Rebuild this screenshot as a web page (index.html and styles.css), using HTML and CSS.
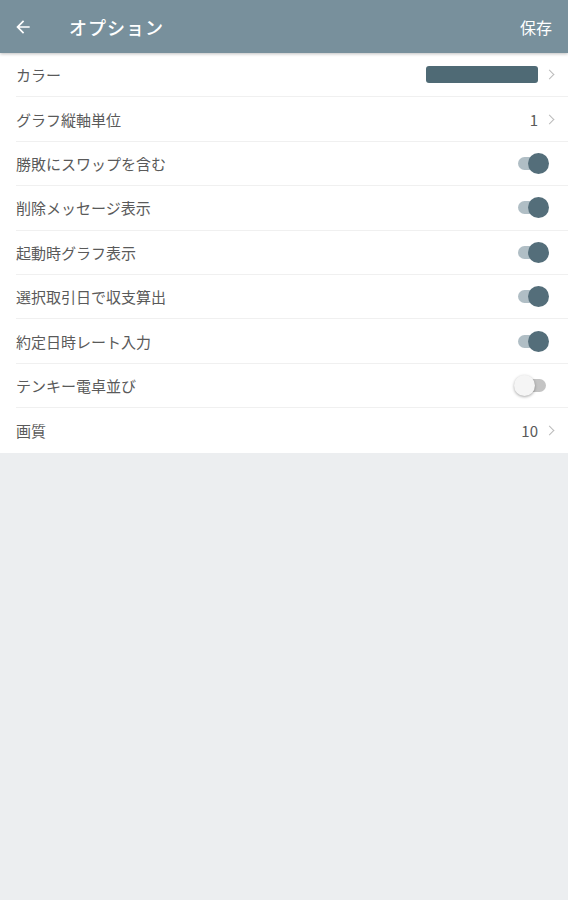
FILE: index.html
```html
<!DOCTYPE html>
<html lang="ja">
<head>
    <meta charset="UTF-8">
    <meta name="viewport" content="width=device-width, initial-scale=1.0">
    <title>オプション</title>
    <link rel="stylesheet" href="styles.css">
</head>
<body>
    <header class="toolbar">
        <svg class="back" width="20" height="20" viewBox="0 0 24 24">
            <path d="M20 11H7.83l5.59-5.59L12 4l-8 8 8 8 1.41-1.41L7.83 13H20v-2z" fill="#fff"/>
        </svg>
        <h1 class="title">オプション</h1>
        <span class="save">保存</span>
    </header>

    <ul class="list">
        <li class="row">
            <span class="label">カラー</span>
            <span class="value"><span class="swatch"></span><span class="chev"></span></span>
        </li>
        <li class="row">
            <span class="label">グラフ縦軸単位</span>
            <span class="value">1<span class="chev"></span></span>
        </li>
        <li class="row">
            <span class="label">勝敗にスワップを含む</span>
            <span class="switch on"></span>
        </li>
        <li class="row">
            <span class="label">削除メッセージ表示</span>
            <span class="switch on"></span>
        </li>
        <li class="row">
            <span class="label">起動時グラフ表示</span>
            <span class="switch on"></span>
        </li>
        <li class="row">
            <span class="label">選択取引日で収支算出</span>
            <span class="switch on"></span>
        </li>
        <li class="row">
            <span class="label">約定日時レート入力</span>
            <span class="switch on"></span>
        </li>
        <li class="row">
            <span class="label">テンキー電卓並び</span>
            <span class="switch"></span>
        </li>
        <li class="row">
            <span class="label">画質</span>
            <span class="value">10<span class="chev"></span></span>
        </li>
    </ul>
</body>
</html>
```

FILE: styles.css
```css
body {
    margin: 0;
    background-color: #eceef0;
    font-family: "Noto Sans CJK JP", "Noto Sans", sans-serif;
    color: #555;
}
.toolbar {
    height: 53px;
    background-color: #78909c;
    display: flex;
    align-items: center;
    padding: 0 16px 0 13px;
    box-shadow: 0 1px 3px rgba(0, 0, 0, 0.25);
    position: relative;
    z-index: 1;
}
.back {
    margin-right: 36px;
}
.title {
    flex: 1;
    margin: 0;
    font-size: 18px;
    font-weight: 500;
    color: #fff;
    letter-spacing: 1px;
}
.save {
    color: #fff;
    font-size: 16px;
}
.list {
    list-style: none;
    margin: 0;
    padding: 0;
    background-color: #fff;
}
.row {
    height: 44.4px;
    box-sizing: border-box;
    margin-left: 16px;
    padding-right: 15px;
    display: flex;
    align-items: center;
    justify-content: space-between;
    border-bottom: 1px solid #f0f0f0;
}
.row:last-child {
    border-bottom: none;
}
.label {
    font-size: 15px;
    color: #5a5a5a;
}
.value {
    display: flex;
    align-items: center;
    font-size: 15px;
    color: #5a5a5a;
}
.swatch {
    width: 112px;
    height: 17px;
    border-radius: 3px;
    background-color: #4f6a75;
}
.chev {
    width: 6px;
    height: 6px;
    border-top: 1.5px solid #bbb;
    border-right: 1.5px solid #bbb;
    transform: rotate(45deg);
    margin-left: 8px;
    margin-right: 0;
}
.switch {
    position: relative;
    width: 28px;
    height: 13px;
    border-radius: 7px;
    background-color: #b0bec5;
    margin-right: 7px;
}
.switch::after {
    content: "";
    position: absolute;
    top: -4px;
    left: 10px;
    width: 21px;
    height: 21px;
    border-radius: 50%;
    background-color: #546e7a;
}
.switch:not(.on) {
    background-color: #c4c4c4;
}
.switch:not(.on)::after {
    left: -4px;
    background-color: #f5f5f5;
    box-shadow: 0 1px 3px rgba(0, 0, 0, 0.35);
}
```
